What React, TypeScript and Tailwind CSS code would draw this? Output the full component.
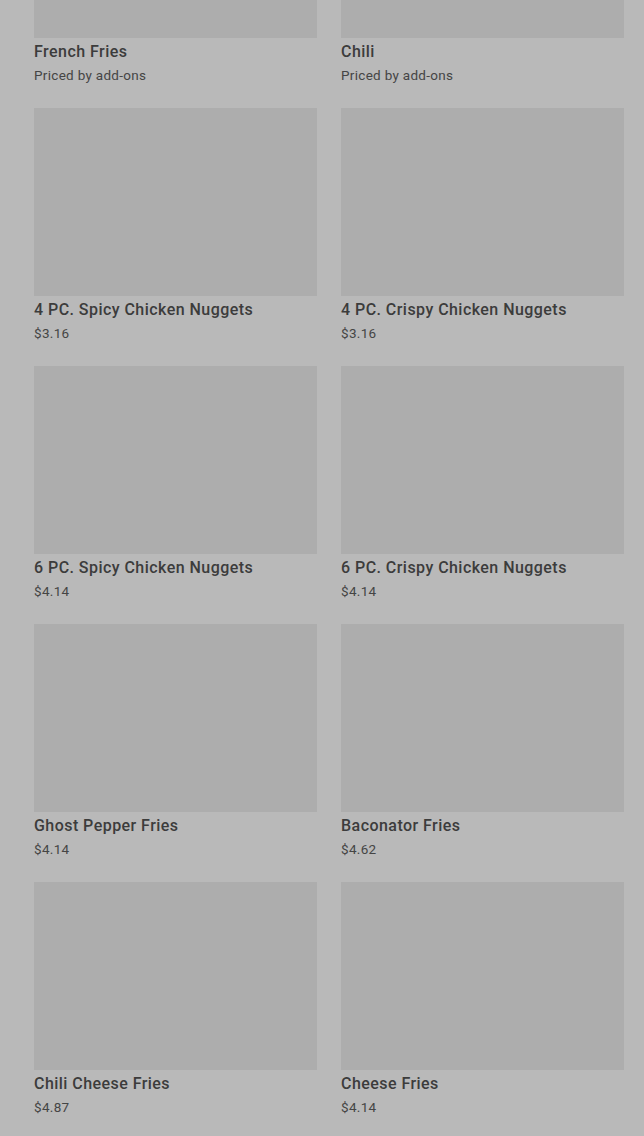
import React from 'react';

type Item = { name: string; price: string };

const items: Item[] = [
  { name: 'French Fries', price: 'Priced by add-ons' },
  { name: 'Chili', price: 'Priced by add-ons' },
  { name: '4 PC. Spicy Chicken Nuggets', price: '$3.16' },
  { name: '4 PC. Crispy Chicken Nuggets', price: '$3.16' },
  { name: '6 PC. Spicy Chicken Nuggets', price: '$4.14' },
  { name: '6 PC. Crispy Chicken Nuggets', price: '$4.14' },
  { name: 'Ghost Pepper Fries', price: '$4.14' },
  { name: 'Baconator Fries', price: '$4.62' },
  { name: 'Chili Cheese Fries', price: '$4.87' },
  { name: 'Cheese Fries', price: '$4.14' },
];

const MenuCard: React.FC<{ item: Item }> = ({ item }) => (
  <div className="flex flex-col">
    <div className="h-[188px] w-full bg-[#adadad]" />
    <div className="mt-1 text-[16px] leading-5 font-medium text-[#3c3c3c] tracking-[0.45px]">
      {item.name}
    </div>
    <div className="mt-1 text-[13.5px] leading-[18px] text-[#454545] tracking-[0.3px]">
      {item.price}
    </div>
  </div>
);

export default function App() {
  return (
    <div
      className="h-[1136px] w-[644px] overflow-hidden bg-[#b9b9b9]"
      style={{ fontFamily: 'Roboto, "Noto Sans", sans-serif' }}
    >
      <div className="-mt-[150px] grid grid-cols-2 gap-x-6 gap-y-6 pl-[34px] pr-5">
        {items.map((item) => (
          <MenuCard key={item.name} item={item} />
        ))}
      </div>
    </div>
  );
}
